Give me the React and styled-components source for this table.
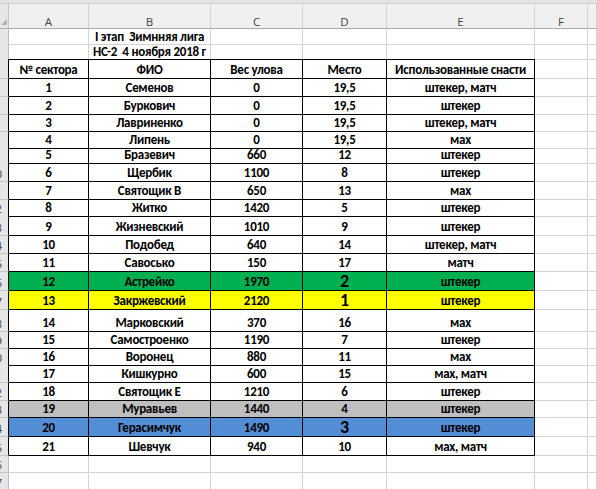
import styled, { createGlobalStyle } from 'styled-components';

const COLS = '9px 80px 122px 92px 84px 148px 53px 1fr';
const GRID = '#d4d4d4';
const INK = '#000';

const FILLS = {
  green: '#00b050',
  yellow: '#ffff00',
  gray: '#bfbfbf',
  blue: '#538dd5',
};

// sector, name, weight, place, gear, row height, fill, big place
const data = [
  [1, 'Семенов', 0, '19,5', 'штекер, матч', 18],
  [2, 'Буркович', 0, '19,5', 'штекер', 18],
  [3, 'Лавриненко', 0, '19,5', 'штекер, матч', 17],
  [4, 'Липень', 0, '19,5', 'мах', 15],
  [5, 'Бразевич', 660, '12', 'штекер', 16],
  [6, 'Щербик', 1100, '8', 'штекер', 19],
  [7, 'Святощик В', 650, '13', 'мах', 18],
  [8, 'Житко', 1420, '5', 'штекер', 16],
  [9, 'Жизневский', 1010, '9', 'штекер', 20],
  [10, 'Подобед', 640, '14', 'штекер, матч', 18],
  [11, 'Савосько', 150, '17', 'матч', 18],
  [12, 'Астрейко', 1970, '2', 'штекер', 19, 'green', true],
  [13, 'Закржевский', 2120, '1', 'штекер', 19, 'yellow', true],
  [14, 'Марковский', 370, '16', 'мах', 22],
  [15, 'Самостроенко', 1190, '7', 'штекер', 17],
  [16, 'Воронец', 880, '11', 'мах', 16],
  [17, 'Кишкурно', 600, '15', 'мах, матч', 18],
  [18, 'Святощик Е', 1210, '6', 'штекер', 18],
  [19, 'Муравьев', 1440, '4', 'штекер', 17, 'gray'],
  [20, 'Герасимчук', 1490, '3', 'штекер', 19, 'blue', true],
  [21, 'Шевчук', 940, '10', 'мах, матч', 19],
];

const GlobalStyle = createGlobalStyle`
  html, body {
    margin: 0;
    padding: 0;
    background: #fff;
    overflow: hidden;
  }
`;

const Sheet = styled.div`
  width: 597px;
  height: 489px;
  overflow: hidden;
  background: #fff;
`;

const TopStrip = styled.div`
  height: 4px;
  background: #e3e3e3;
  border-bottom: 1px solid #cfcfcf;
  box-sizing: border-box;
`;

const Row = styled.div`
  display: grid;
  grid-template-columns: ${COLS};
  height: ${p => p.$h}px;
`;

const HeadBand = styled(Row)`
  background: #f0f0f0;
`;

const Corner = styled.div`
  border-right: 1px solid #c6c6c6;
  border-bottom: 1px solid #ababab;
  box-sizing: border-box;
  display: flex;
  align-items: flex-end;
  justify-content: flex-end;
  padding: 0 1px 3px 0;
  background: #e6e6e6;
`;

const Letter = styled.div`
  box-sizing: border-box;
  border-right: 1px solid #d2d2d2;
  border-bottom: 1px solid #ababab;
  display: flex;
  align-items: flex-end;
  justify-content: center;
  font: 400 11.5px/13px 'Open Sans', 'Noto Sans', sans-serif;
  color: #444;
`;

const RowNum = styled.div`
  box-sizing: border-box;
  background: #e6e6e6;
  border-right: 1px solid ${p => (p.$dark ? INK : '#bdbdbd')};
  border-bottom: 1px solid #c6c6c6;
  overflow: hidden;
  display: flex;
  align-items: flex-end;
  justify-content: flex-end;
  padding-right: 6px;
  white-space: nowrap;
  font: 400 11.5px/15px 'Open Sans', 'Noto Sans', sans-serif;
  color: #444;
`;

const Cell = styled.div`
  box-sizing: border-box;
  min-width: 0;
  background: ${p => (p.$fill ? FILLS[p.$fill] : 'transparent')};
  border-right: 1px solid ${p => p.$rc || GRID};
  border-bottom: 1px solid ${p => p.$bc || GRID};
  display: flex;
  align-items: flex-end;
  justify-content: center;
  white-space: nowrap;
  font: 700 13px/16px Carlito, Calibri, Lato, 'Liberation Sans', sans-serif;
  letter-spacing: -0.25px;
  color: #000;
`;

const Place = styled.span`
  font-size: ${p => (p.$big ? '18px' : 'inherit')};
  font-weight: ${p => (p.$big ? 900 : 'inherit')};
  line-height: ${p => (p.$big ? '17px' : 'inherit')};
`;

const Title = styled.span`
  line-height: 15px;
`;

const lastDigits = n => (n >= 10 ? String(n) : '');

function Blank({ n, h }) {
  return (
    <Row $h={h}>
      <RowNum>{lastDigits(n)}</RowNum>
      {[0, 1, 2, 3, 4, 5, 6].map(i => (
        <Cell key={i} />
      ))}
    </Row>
  );
}

function TableRow({ n, h, fill, cells }) {
  return (
    <Row $h={h}>
      <RowNum $dark>{lastDigits(n)}</RowNum>
      {cells.map((c, i) => (
        <Cell key={i} $fill={fill} $rc={INK} $bc={INK}>
          {c}
        </Cell>
      ))}
      <Cell />
      <Cell />
    </Row>
  );
}

export default function App() {
  return (
    <Sheet>
      <GlobalStyle />
      <TopStrip />
      <HeadBand $h={25}>
        <Corner>
          <svg width="6" height="6" viewBox="0 0 6 6">
            <path d="M6 0 L6 6 L0 6 Z" fill="#b5b5b5" />
          </svg>
        </Corner>
        {['A', 'B', 'C', 'D', 'E', 'F', ''].map((l, i) => (
          <Letter key={i}>{l}</Letter>
        ))}
      </HeadBand>

      <Row $h={15}>
        <RowNum />
        <Cell />
        <Cell>
          <Title>I этап&nbsp; Зимнняя лига</Title>
        </Cell>
        <Cell />
        <Cell />
        <Cell />
        <Cell />
        <Cell />
      </Row>
      <Row $h={15}>
        <RowNum />
        <Cell $bc={INK} />
        <Cell $bc={INK}>
          <Title>НС-2&nbsp; 4 ноября 2018 г</Title>
        </Cell>
        <Cell $bc={INK} />
        <Cell $bc={INK} />
        <Cell $bc={INK} />
        <Cell />
        <Cell />
      </Row>

      <TableRow
        n={4}
        h={20}
        cells={['№ сектора', 'ФИО', 'Вес улова', 'Место', 'Использованные снасти']}
      />

      {data.map(([sector, name, weight, place, gear, h, fill, big]) => (
        <TableRow
          key={sector}
          n={sector + 4}
          h={h}
          fill={fill}
          cells={[
            sector,
            name,
            weight,
            <Place $big={big}>{place}</Place>,
            gear,
          ]}
        />
      ))}

      <Blank n={26} h={17} />
      <Blank n={27} h={18} />
    </Sheet>
  );
}
